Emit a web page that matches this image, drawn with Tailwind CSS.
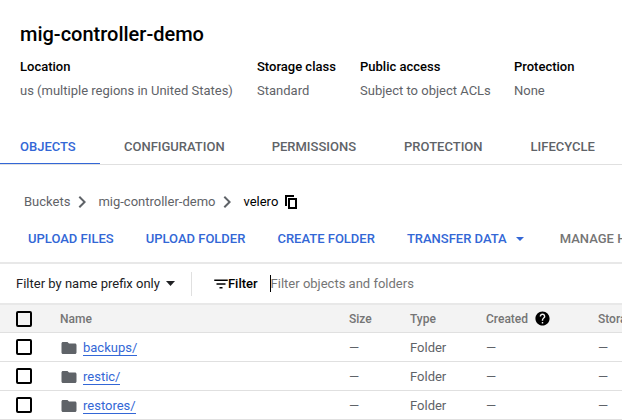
<!DOCTYPE html>
<html lang="en">
<head>
  <meta charset="UTF-8">
  <title>mig-controller-demo</title>
  <script src="https://cdn.jsdelivr.net/npm/@tailwindcss/browser@4"></script>
</head>
<body class="bg-white w-[622px] h-[420px] overflow-hidden font-['Roboto',sans-serif] text-[13px] text-[#5f6368]">

  <!-- Bucket header -->
  <div class="pl-5 pt-[22px] h-[106px]">
    <h1 class="text-[20px] leading-6 font-medium text-[#000]">mig-controller-demo</h1>
    <div class="flex mt-[13px] leading-4">
      <div class="w-[237px]">
        <div class="font-medium text-[#000]">Location</div>
        <div class="mt-2">us (multiple regions in United States)</div>
      </div>
      <div class="w-[103px]">
        <div class="font-medium text-[#000]">Storage class</div>
        <div class="mt-2">Standard</div>
      </div>
      <div class="w-[154px]">
        <div class="font-medium text-[#000]">Public access</div>
        <div class="mt-2">Subject to object ACLs</div>
      </div>
      <div>
        <div class="font-medium text-[#000]">Protection</div>
        <div class="mt-2">None</div>
      </div>
    </div>
  </div>

  <!-- Tabs -->
  <div class="flex h-[59px] border-b border-[#e0e0e0] font-medium whitespace-nowrap overflow-hidden">
    <div class="w-[100px] pl-5 pt-[31px] h-[59px] border-b-2 border-[#3367d6] text-[#3367d6]">OBJECTS</div>
    <div class="pl-6 pt-[31px]">CONFIGURATION</div>
    <div class="pl-[47px] pt-[31px]">PERMISSIONS</div>
    <div class="pl-12 pt-[31px]">PROTECTION</div>
    <div class="pl-12 pt-[31px]">LIFECYCLE</div>
  </div>

  <!-- Breadcrumbs -->
  <div class="flex items-center h-[24px] mt-[25px] pl-6 whitespace-nowrap">
    <span>Buckets</span>
    <svg class="w-6 h-6 mr-[4px] shrink-0" viewBox="0 0 24 24" fill="#5f6368"><path d="M10 6 8.59 7.41 13.17 12l-4.58 4.59L10 18l6-6z"/></svg>
    <span>mig-controller-demo</span>
    <svg class="w-6 h-6 mr-[4px] shrink-0" viewBox="0 0 24 24" fill="#5f6368"><path d="M10 6 8.59 7.41 13.17 12l-4.58 4.59L10 18l6-6z"/></svg>
    <span class="text-[#000]">velero</span>
    <svg class="w-[12px] h-[14px] ml-[7px] shrink-0" viewBox="0 0 12 14" fill="#000"><path d="M9 0H0v11h2V2h7V0z"/><path fill-rule="evenodd" d="M3 3h9v11H3V3zm2 2v7h5V5H5z"/></svg>
  </div>

  <!-- Actions -->
  <div class="flex items-center h-[50px] pl-7 pt-[2px] border-b-2 border-[#e8e8e8] font-medium text-[#3367d6] whitespace-nowrap overflow-hidden">
    <span>UPLOAD FILES</span>
    <span class="ml-8">UPLOAD FOLDER</span>
    <span class="ml-8">CREATE FOLDER</span>
    <span class="ml-8">TRANSFER DATA</span>
    <svg class="w-2 h-1 ml-[9px] shrink-0" viewBox="0 0 8 4" fill="#3367d6"><path d="M0 0h8L4 4z"/></svg>
    <span class="ml-9 text-[#757575]">MANAGE HOLDS</span>
  </div>

  <!-- Filter bar -->
  <div class="flex items-center h-[39px] pl-4 whitespace-nowrap text-[#202124]">
    <span>Filter by name prefix only</span>
    <svg class="w-[9px] h-[5px] ml-[6px] shrink-0" viewBox="0 0 9 5" fill="#202124"><path d="M0 0h9L4.500 5z"/></svg>
    <div class="w-px h-6 bg-[#e0e0e0] ml-[16px]"></div>
    <svg class="w-[18px] h-[18px] ml-[20px] shrink-0" viewBox="0 0 24 24" fill="#000"><path d="M10 18h4v-2h-4v2zM3 6v2h18V6H3zm3 7h12v-2H6v2z"/></svg>
    <span class="font-medium text-[#000] -ml-[2px]">Filter</span>
    <div class="w-px h-[17px] bg-[#000] ml-[12px]"></div>
    <span class="text-[#757575]">Filter objects and folders</span>
  </div>

  <!-- Objects table -->
  <div class="w-full overflow-hidden border-t-2 border-[#e8e8e8] whitespace-nowrap">
    <div class="flex items-center h-[28px] bg-[#f3f3f3] font-medium text-[12px] text-[#757575] border-b border-[#e0e0e0]">
      <div class="w-[60px] pl-4 shrink-0"><div class="w-4 h-4 border-2 border-[#000] rounded-[2px]"></div></div>
      <div class="w-[289px] shrink-0">Name</div>
      <div class="w-[61px] shrink-0">Size</div>
      <div class="w-[76px] shrink-0">Type</div>
      <div class="w-[112px] shrink-0 flex items-center">Created
        <svg class="w-[17px] h-[17px] ml-[6px]" viewBox="0 0 24 24" fill="#000"><path d="M12 2C6.480 2 2 6.480 2 12s4.480 10 10 10 10-4.480 10-10S17.520 2 12 2zm1 17h-2v-2h2v2zm2.070-7.750-.9.920C13.450 12.900 13 13.500 13 15h-2v-.5c0-1.100.45-2.100 1.170-2.830l1.240-1.260c.37-.36.59-.86.59-1.410 0-1.100-.9-2-2-2s-2 .9-2 2H8c0-2.210 1.790-4 4-4s4 1.790 4 4c0 .88-.36 1.680-.93 2.250z"/></svg>
      </div>
      <div class="shrink-0">Storage class</div>
    </div>

    <div class="flex items-center h-[29px] border-b border-[#e0e0e0]">
      <div class="w-[60px] pl-4 shrink-0"><div class="w-4 h-4 border-2 border-[#000] rounded-[2px]"></div></div>
      <div class="w-[289px] pt-[2px] shrink-0 flex items-center">
        <svg class="w-[18px] h-[18px] mr-[5px] shrink-0" viewBox="0 0 24 24" fill="#5f6368"><path d="M10 4H4c-1.100 0-2 .9-2 2v12c0 1.100.9 2 2 2h16c1.100 0 2-.9 2-2V8c0-1.100-.9-2-2-2h-8l-2-2z"/></svg>
        <a class="text-[#3367d6] border-b border-[#3367d6] leading-[15px]">backups/</a>
      </div>
      <div class="w-[61px] pt-[2px] shrink-0">—</div>
      <div class="w-[76px] pt-[2px] shrink-0">Folder</div>
      <div class="w-[112px] pt-[2px] shrink-0">—</div>
      <div class="pt-[2px] shrink-0">—</div>
    </div>

    <div class="flex items-center h-[29px] border-b border-[#e0e0e0]">
      <div class="w-[60px] pl-4 shrink-0"><div class="w-4 h-4 border-2 border-[#000] rounded-[2px]"></div></div>
      <div class="w-[289px] pt-[2px] shrink-0 flex items-center">
        <svg class="w-[18px] h-[18px] mr-[5px] shrink-0" viewBox="0 0 24 24" fill="#5f6368"><path d="M10 4H4c-1.100 0-2 .9-2 2v12c0 1.100.9 2 2 2h16c1.100 0 2-.9 2-2V8c0-1.100-.9-2-2-2h-8l-2-2z"/></svg>
        <a class="text-[#3367d6] border-b border-[#3367d6] leading-[15px]">restic/</a>
      </div>
      <div class="w-[61px] pt-[2px] shrink-0">—</div>
      <div class="w-[76px] pt-[2px] shrink-0">Folder</div>
      <div class="w-[112px] pt-[2px] shrink-0">—</div>
      <div class="pt-[2px] shrink-0">—</div>
    </div>

    <div class="flex items-center h-[29px] border-b border-[#e0e0e0]">
      <div class="w-[60px] pl-4 shrink-0"><div class="w-4 h-4 border-2 border-[#000] rounded-[2px]"></div></div>
      <div class="w-[289px] pt-[2px] shrink-0 flex items-center">
        <svg class="w-[18px] h-[18px] mr-[5px] shrink-0" viewBox="0 0 24 24" fill="#5f6368"><path d="M10 4H4c-1.100 0-2 .9-2 2v12c0 1.100.9 2 2 2h16c1.100 0 2-.9 2-2V8c0-1.100-.9-2-2-2h-8l-2-2z"/></svg>
        <a class="text-[#3367d6] border-b border-[#3367d6] leading-[15px]">restores/</a>
      </div>
      <div class="w-[61px] pt-[2px] shrink-0">—</div>
      <div class="w-[76px] pt-[2px] shrink-0">Folder</div>
      <div class="w-[112px] pt-[2px] shrink-0">—</div>
      <div class="pt-[2px] shrink-0">—</div>
    </div>
  </div>
</body>
</html>
